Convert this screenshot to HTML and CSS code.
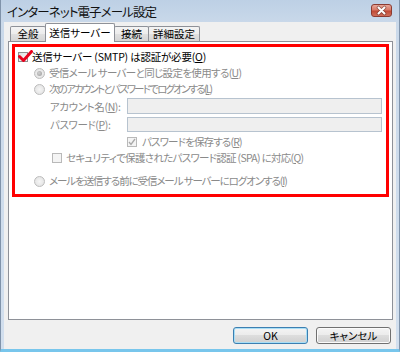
FILE: index.html
```html
<!DOCTYPE html>
<html lang="ja">
<head>
<meta charset="utf-8">
<title>インターネット電子メール設定</title>
<link rel="stylesheet" href="styles.css">
</head>
<body>
<div class="window">
  <div class="titlebar">
    <span class="title">インターネット電子メール設定</span>
    <span class="close">
      <svg width="21" height="13" viewBox="0 0 21 13">
        <path d="M7.5 3.5 L13.5 9.5 M13.5 3.5 L7.5 9.5" stroke="#5a2a24" stroke-width="3.6" stroke-linecap="round" opacity="0.55"/>
        <path d="M7.5 3.5 L13.5 9.5 M13.5 3.5 L7.5 9.5" stroke="#ffffff" stroke-width="2" stroke-linecap="round"/>
      </svg>
    </span>
  </div>
  <div class="client">
    <div class="tabs">
      <div class="tab t1">全般</div>
      <div class="tab active">送信サーバー</div>
      <div class="tab t3">接続</div>
      <div class="tab t4">詳細設定</div>
    </div>
    <div class="panel">
      <div class="highlight">
        <div class="row r1">
          <span class="cb">
            <svg class="redcheck" width="15" height="13" viewBox="0 0 15 13">
              <path d="M1.5 6.5 L5.5 10.5 L13.5 1.5" fill="none" stroke="#e8001c" stroke-width="3" stroke-linejoin="round" stroke-linecap="round"/>
            </svg>
          </span>
          <span class="lbl dark">送信サーバー (SMTP) は認証が必要(<u>O</u>)</span>
        </div>
        <div class="row r2">
          <span class="radio on"></span>
          <span class="lbl">受信メール サーバーと同じ設定を使用する(<u>U</u>)</span>
        </div>
        <div class="row r3">
          <span class="radio"></span>
          <span class="lbl">次のアカウントとパスワードでログオンする(<u>L</u>)</span>
        </div>
        <div class="row field acct">
          <span class="flabel">アカウント名(<u>N</u>):</span>
          <span class="input"></span>
        </div>
        <div class="row field pw">
          <span class="flabel">パスワード(<u>P</u>):</span>
          <span class="input"></span>
        </div>
        <div class="row savepw">
          <span class="cb dis">
            <svg width="8" height="8" viewBox="0 0 8 8"><path d="M1 4 L3 6.5 L7 1" fill="none" stroke="#a9a9a9" stroke-width="1.3"/></svg>
          </span>
          <span class="lbl">パスワードを保存する(<u>R</u>)</span>
        </div>
        <div class="row spa">
          <span class="cb dis"></span>
          <span class="lbl">セキュリティで保護されたパスワード認証 (SPA) に対応(<u>Q</u>)</span>
        </div>
        <div class="row last">
          <span class="radio"></span>
          <span class="lbl">メールを送信する前に受信メール サーバーにログオンする(<u>I</u>)</span>
        </div>
      </div>
    </div>
    <div class="buttons">
      <button class="btn default">OK</button>
      <button class="btn">キャンセル</button>
    </div>
  </div>
</div>
</body>
</html>
```
FILE: styles.css
```css
* { box-sizing: border-box; }
html, body { margin: 0; padding: 0; }
body {
  width: 400px;
  height: 352px;
  overflow: hidden;
  background: #ffffff;
  font-family: "Noto Sans CJK JP", "Noto Sans", sans-serif;
  font-feature-settings: "palt";
  color: #000;
}
.window {
  height: 352px;
  display: flex;
  flex-direction: column;
  padding: 0 3px 0 3px;
  background: linear-gradient(#bdd0e5, #cad9ea 24px, #d2dfee);
  border-left: 1px solid #8093aa;
  border-right: 1px solid #8093aa;
  border-bottom: 3px solid #78c6ec;
}
.titlebar {
  height: 22px;
  flex: none;
  display: flex;
  justify-content: space-between;
  align-items: flex-start;
  padding-left: 3px;
}
.title {
  font-size: 12.5px;
  line-height: 14px;
  letter-spacing: -0.9px;
  margin-top: 5px;
  color: #111;
}
.close {
  width: 21px;
  height: 13px;
  margin-top: 4px;
  margin-right: 4px;
  border: 1px solid #8c3b31;
  border-radius: 3px;
  background: linear-gradient(#e9a899, #d77a68 45%, #c14a36 55%, #d0705c);
  display: flex;
  align-items: center;
  justify-content: center;
  overflow: hidden;
}
.close svg { display: block; margin: -1px; }
.client {
  flex: 1;
  display: flex;
  flex-direction: column;
  background: #f0f0f0;
}
.tabs {
  height: 19px;
  flex: none;
  display: flex;
  align-items: flex-end;
  padding-left: 6px;
  position: relative;
  z-index: 1;
}
.tab {
  height: 15px;
  font-size: 10.5px;
  line-height: 14px;
  text-align: center;
  border: 1px solid #8e9198;
  border-bottom: none;
  border-radius: 2px 2px 0 0;
  background: linear-gradient(#f4f4f4, #ececec 50%, #e0e0e0 50%, #d5d5d5);
  margin-right: -1px;
}
.t1 { width: 36px; }
.t3 { width: 35px; }
.t4 { width: 52px; }
.tab.active {
  width: 70px;
  height: 19px;
  margin-bottom: -1px;
  background: #ffffff;
  line-height: 17px;
  position: relative;
  z-index: 2;
}
.panel {
  height: 279px;
  flex: none;
  margin: 0 3px 0 4px;
  background: #ffffff;
  border: 1px solid #8e9198;
  padding: 2px 3px 0 3px;
}
.highlight {
  border: 3px solid #ff0000;
  padding: 2px 0 5px 0;
  display: flex;
  flex-direction: column;
}
.row {
  height: 16px;
  display: flex;
  align-items: center;
  font-size: 10.5px;
  letter-spacing: -0.2px;
  white-space: nowrap;
  color: #8a8a8a;
}
.row u { text-decoration: underline; text-underline-offset: 1px; }
.lbl { line-height: 14px; }
.lbl.dark { color: #000; }
.r1 { padding-left: 3px; }
.r2, .r3, .last { padding-left: 19px; }
.r2 .lbl { letter-spacing: -0.65px; }
.r3 .lbl { letter-spacing: -1.8px; }
.last { margin-top: 8px; }
.last .lbl { letter-spacing: -1.1px; }
.acct { margin-top: 1px; }
.pw { margin-top: 2px; }
.savepw { margin-top: 2px; padding-left: 112px; }
.savepw .lbl { letter-spacing: -0.85px; }
.spa { height: 15px; padding-left: 37px; }
.spa .lbl { letter-spacing: -0.7px; }
.field { padding-left: 35px; padding-right: 4px; }
.flabel { width: 77px; flex: none; letter-spacing: -0.4px; }
.input {
  flex: 1;
  height: 16px;
  background: #efefef;
  border: 1px solid #b7c3cf;
}
.pw .input { height: 15px; }
.cb {
  width: 10px;
  height: 10px;
  flex: none;
  margin-right: 4px;
  border: 1px solid #8f8f8f;
  background: linear-gradient(135deg, #dcdcdc, #fbfbfb);
  position: relative;
  display: flex;
  align-items: center;
  justify-content: center;
}
.cb.dis {
  border-color: #b9b9b9;
  background: #f4f4f4;
}
.savepw .cb { margin-right: 5px; }
.redcheck {
  position: absolute;
  left: -1px;
  top: -3px;
}
.radio {
  width: 11px;
  height: 11px;
  flex: none;
  margin-right: 4px;
  border-radius: 50%;
  border: 1px solid #bcbcbc;
  background: radial-gradient(circle at 50% 50%, #f6f6f6, #dedede);
  display: flex;
  align-items: center;
  justify-content: center;
}
.radio.on::after {
  content: "";
  width: 5px;
  height: 5px;
  border-radius: 50%;
  background: radial-gradient(circle at 40% 40%, #d0d0d0, #9a9a9a);
}
.buttons {
  flex: none;
  height: 17px;
  margin-top: 7px;
  display: flex;
  justify-content: flex-end;
  gap: 8px;
  padding-right: 5px;
}
.btn {
  width: 75px;
  height: 17px;
  padding: 0;
  font-family: "Noto Sans CJK JP", "Noto Sans", sans-serif;
  font-feature-settings: "palt";
  font-size: 10.5px;
  line-height: 15px;
  color: #000;
  border: 1px solid #707070;
  border-radius: 3px;
  background: linear-gradient(#f4f4f4, #ececec 45%, #dddddd 50%, #d0d0d0);
  box-shadow: inset 0 0 0 1px #fbfbfb;
}
.btn.default {
  border-color: #3c7fb1;
  box-shadow: inset 0 0 0 1px #a8def6;
}
```
